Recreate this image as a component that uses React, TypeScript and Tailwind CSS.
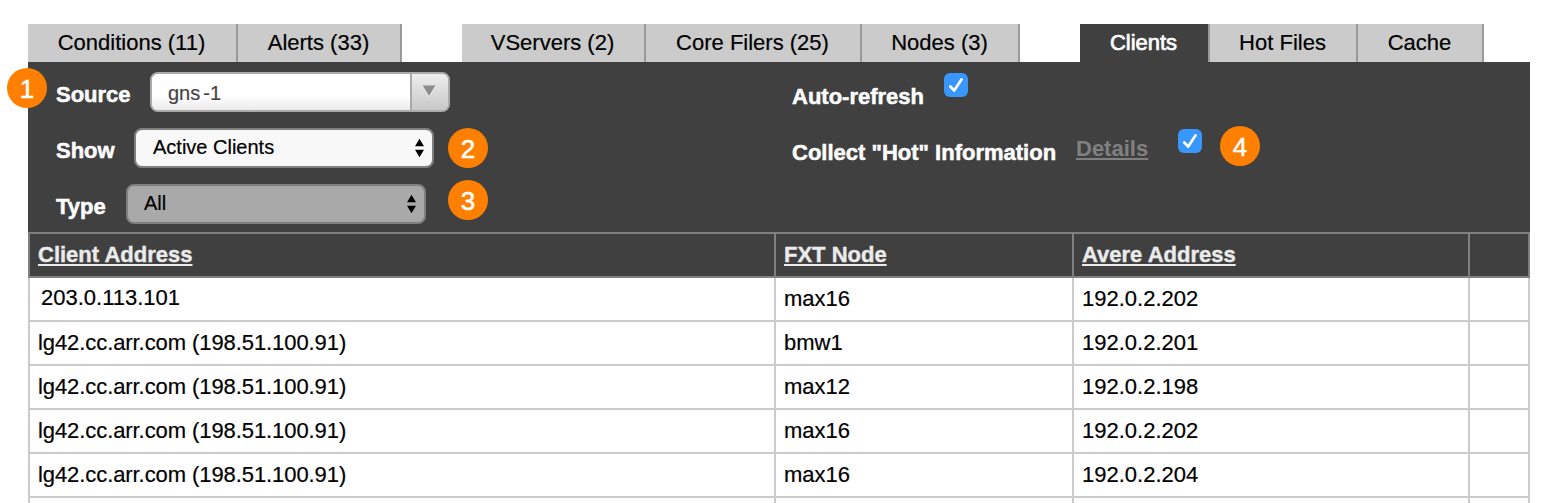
import { ReactNode } from "react";

const tabGroups = [
  {
    className: "",
    tabs: [
      { label: "Conditions (11)", width: "w-[210px]" },
      { label: "Alerts (33)", width: "w-[164px]" },
    ],
  },
  {
    className: "ml-[60px]",
    tabs: [
      { label: "VServers (2)", width: "w-[184px]" },
      { label: "Core Filers (25)", width: "w-[216px]" },
      { label: "Nodes (3)", width: "w-[158px]" },
    ],
  },
  {
    className: "ml-[60px]",
    tabs: [
      { label: "Clients", width: "w-[130px]", active: true },
      { label: "Hot Files", width: "w-[148px]" },
      { label: "Cache", width: "w-[126px]" },
    ],
  },
];

const rows = [
  ["203.0.113.101", "max16", "192.0.2.202"],
  ["lg42.cc.arr.com (198.51.100.91)", "bmw1", "192.0.2.201"],
  ["lg42.cc.arr.com (198.51.100.91)", "max12", "192.0.2.198"],
  ["lg42.cc.arr.com (198.51.100.91)", "max16", "192.0.2.202"],
  ["lg42.cc.arr.com (198.51.100.91)", "max16", "192.0.2.204"],
  ["", "", ""],
];

function Tab({ label, width, active }: { label: string; width: string; active?: boolean }) {
  const tone = active
    ? "bg-[#404040] text-white [-webkit-text-stroke:0.7px_white]"
    : "bg-[#cbcbcb] text-black [-webkit-text-stroke:0.2px_black]";
  return (
    <div className={`h-[38px] shrink-0 border-r-2 border-[#999] pr-px text-center leading-[38px] ${width} ${tone}`}>
      {label}
    </div>
  );
}

function Badge({ className, children }: { className: string; children: ReactNode }) {
  return (
    <span
      className={`absolute flex size-10 items-center justify-center rounded-full bg-[#ff8000] pt-px text-[26px] leading-none text-white [-webkit-text-stroke:0.5px_white] ${className}`}
    >
      {children}
    </span>
  );
}

function Label({ children }: { children: ReactNode }) {
  return (
    <span className="pt-[3px] font-bold leading-10 text-white [-webkit-text-stroke:0.5px_white]">{children}</span>
  );
}

function Stepper() {
  return (
    <svg className="ml-auto" width="10" height="20" viewBox="0 0 10 20">
      <path d="M5.5 0.8 L10 8.2 H1 Z M5.5 19.2 L1 11.8 H10 Z" fill="#000" />
    </svg>
  );
}

function Select({ value, className }: { value: string; className: string }) {
  return (
    <div
      className={`flex h-10 w-[300px] shrink-0 items-center rounded-lg border-2 border-[#808080] pr-2 text-xl text-black [-webkit-text-stroke:0.2px_black] ${className}`}
    >
      <span className="pb-[3px] leading-6">{value}</span>
      <Stepper />
    </div>
  );
}

function Checkbox() {
  return (
    <span className="mt-px flex size-6 rounded-[6px] bg-[#3797fd]">
      <svg width="24" height="24" viewBox="0 0 24 24" fill="none">
        <path d="M6.3 13.5 L10.2 17.6 L17.6 6.3" stroke="#fff" strokeWidth="2.7" strokeLinecap="round" strokeLinejoin="round" />
      </svg>
    </span>
  );
}

function HeaderCell({ className, children }: { className: string; children?: ReactNode }) {
  return (
    <div
      className={`h-[46px] border-y-2 border-r-2 border-[#808080] pl-2 leading-[42px] [-webkit-text-stroke:0.4px_#ebebeb] ${className}`}
    >
      <span className="underline decoration-2 underline-offset-[2px] [text-decoration-skip-ink:none]">{children}</span>
    </div>
  );
}

export default function App() {
  return (
    <div className="h-[503px] w-[1548px] overflow-hidden bg-white font-['Liberation_Sans',Arial,sans-serif] text-[22px]">
      <div className="flex pl-7 pt-6">
        {tabGroups.map((group, i) => (
          <div key={i} className={`flex ${group.className}`}>
            {group.tabs.map((tab) => (
              <Tab key={tab.label} {...tab} />
            ))}
          </div>
        ))}
      </div>

      <div className="relative ml-7 flex h-[170px] w-[1502px] bg-[#404040] pl-7 pt-2.5">
        <div className="flex w-[736px] flex-col gap-4">
          <div className="flex h-10">
            <div className="flex w-[94px]">
              <Label>Source</Label>
            </div>
            <div className="flex h-10 w-[300px] overflow-hidden rounded-lg border-2 border-[#aaa] bg-white text-xl text-[#444] [-webkit-text-stroke:0.2px_#444]">
              <div className="grow bg-linear-to-b from-white from-60% to-[#ebebeb] pl-4 leading-[38px]">
                gns<span className="ml-[3px]">-1</span>
              </div>
              <div className="flex w-[38px] justify-center border-l-2 border-[#aaa] bg-linear-to-b from-[#eee] to-[#c8c8c8] pr-0.5 pt-[11px]">
                <svg width="14" height="12" viewBox="0 0 14 12">
                  <path d="M0 1 H14 L7 12 Z" fill="#fff" />
                  <path d="M0.5 0.5 H13.5 L7 11 Z" fill="#8c8c8c" />
                </svg>
              </div>
            </div>
          </div>
          <div className="flex h-10">
            <div className="flex w-[78px]">
              <Label>Show</Label>
            </div>
            <Select value="Active Clients" className="bg-[#f8f8f8] pl-[17px]" />
          </div>
          <div className="flex h-10">
            <div className="flex w-[70px]">
              <Label>Type</Label>
            </div>
            <Select value="All" className="bg-[#a9a9a9] pl-4" />
          </div>
        </div>
        <div className="flex flex-col gap-4">
          <div className="flex h-10">
            <div className="flex w-[152px] pt-0.5">
              <Label>Auto-refresh</Label>
            </div>
            <Checkbox />
          </div>
          <div className="flex h-10">
            <div className="flex w-[284px] pt-0.5">
              <Label>Collect "Hot" Information</Label>
            </div>
            <span className="w-[102px] font-bold leading-[42px] text-[#808080] underline decoration-2 underline-offset-[2px]">
              Details
            </span>
            <Checkbox />
          </div>
        </div>
        <Badge className="-left-[21px] top-1.5">1</Badge>
        <Badge className="left-[420px] top-[66px]">2</Badge>
        <Badge className="left-[420px] top-[118px]">3</Badge>
        <Badge className="left-[1192px] top-16">4</Badge>
      </div>

      <div className="ml-7 w-[1502px]">
        <div className="flex bg-[#404040] font-bold text-[#ebebeb]">
          <HeaderCell className="w-[748px] border-l-2">Client Address</HeaderCell>
          <HeaderCell className="w-[298px]">FXT Node</HeaderCell>
          <HeaderCell className="w-[396px]">Avere Address</HeaderCell>
          <HeaderCell className="w-[60px]" />
        </div>
        {rows.map(([client, node, address], i) => (
          <div
            key={i}
            className="flex h-11 leading-[42px] text-black [-webkit-text-stroke:0.2px_black] *:border-b-2 *:border-r-2 *:border-[#cbcbcb]"
          >
            <div className={`w-[748px] border-l-2 ${i === 0 ? "pl-[11px] leading-[40px]" : "pl-2 tracking-[-0.08px]"}`}>
              {client}
            </div>
            <div className="w-[298px] pl-2">{node}</div>
            <div className="w-[396px] pl-2">{address}</div>
            <div className="w-[60px]" />
          </div>
        ))}
      </div>
    </div>
  );
}
